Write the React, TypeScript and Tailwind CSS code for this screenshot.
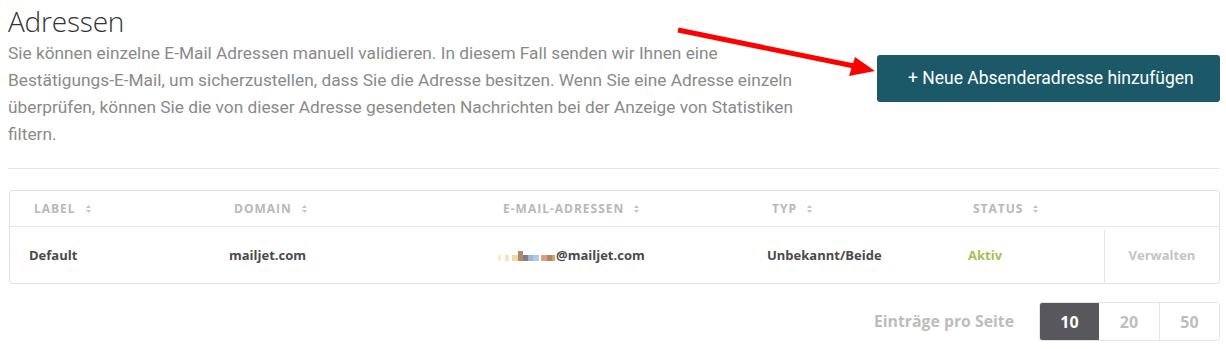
// Adressen-Übersicht
// Absenderadressen mit Tabelle und Seitenauswahl

import React from 'react'

const blurBlocks = [
  { w: 3, c: '#fbeacb' },
  { w: 4, c: '#ffffff' },
  { w: 4, c: '#f6e2bd' },
  { w: 3, c: '#ffffff' },
  { w: 6, c: '#f2d9ae' },
  { w: 5, c: '#b08a68' },
  { w: 5, c: '#7c7f8c' },
  { w: 5, c: '#9fb5c9' },
  { w: 6, c: '#a9cde9' },
  { w: 2, c: '#ffffff' },
  { w: 6, c: '#d3a47c' },
  { w: 5, c: '#b78460' },
  { w: 3, c: '#c9a07c' },
]

const SortIcon = () => (
  <svg width="7" height="10" viewBox="0 0 7 10" className="ml-[9px] inline-block">
    <path d="M3.5 1 L6 4 L1 4 Z" fill="#c4c4c4" />
    <path d="M3.5 9 L6 6 L1 6 Z" fill="#c4c4c4" />
  </svg>
)

const columns = [
  { label: 'Label', w: 'w-[200px]' },
  { label: 'Domain', w: 'w-[269px]' },
  { label: 'E-Mail-Adressen', w: 'w-[269px]' },
  { label: 'Typ', w: 'w-[201px]' },
  { label: 'Status', w: 'w-[155px]' },
]

export default function App() {
  return (
    <div className="relative w-[1226px] h-[349px] bg-white overflow-hidden pl-2 pr-[6px] font-['Roboto',sans-serif]">
      {/* Kopfbereich */}
      <div className="flex justify-between">
        <div className="w-[820px]">
          <h1 className="text-[28px] font-light leading-[36px] pt-[3px] text-[#333] font-['Open_Sans',sans-serif] tracking-[-0.2px]">
            Adressen
          </h1>
          <p className="text-[17.3px] leading-[27px] text-[#8a8a8a] mt-[1px]">
            Sie können einzelne E-Mail Adressen manuell validieren. In diesem Fall senden wir Ihnen eine
            <br />
            Bestätigungs-E-Mail, um sicherzustellen, dass Sie die Adresse besitzen. Wenn Sie eine Adresse einzeln
            <br />
            überprüfen, können Sie die von dieser Adresse gesendeten Nachrichten bei der Anzeige von Statistiken
            <br />
            filtern.
          </p>
        </div>
        <div className="pt-[55px]">
          <button className="w-[343px] h-[47px] rounded-[3px] bg-[#1b5968] text-white text-[17.5px] text-left pl-[31px]">
            + Neue Absenderadresse hinzufügen
          </button>
        </div>
      </div>

      {/* Trennlinie */}
      <div className="mt-[20px] border-t border-[#e6e6e6]" />

      {/* Tabelle */}
      <div className="mt-[21px] ml-[1px] border border-[#e2e2e2] rounded-[3px] font-['Open_Sans',sans-serif]">
        <div className="flex h-[36px] items-center border-b border-[#e6e6e6]">
          {columns.map((col) => (
            <div key={col.label} className={`${col.w} pl-6 flex items-center`}>
              <span className="text-[12px] font-bold uppercase tracking-[1px] text-[#b8b8b8]">
                {col.label}
              </span>
              <SortIcon />
            </div>
          ))}
        </div>
        <div className="flex h-[56px] items-center text-[13px] font-bold text-[#4a4a4a] pt-[2px]">
          <div className="w-[200px] pl-[19px]">Default</div>
          <div className="w-[269px] pl-[19px]">mailjet.com</div>
          <div className="w-[269px] pl-[19px] flex items-center">
            <div className="flex items-end h-[10px] mr-[1px]">
              {blurBlocks.map((b, i) => (
                <div
                  key={i}
                  className={i === 5 ? 'h-[10px]' : 'h-[6px]'}
                  style={{ width: b.w, backgroundColor: b.c }}
                />
              ))}
            </div>
            <span>@mailjet.com</span>
          </div>
          <div className="w-[201px] pl-[19px]">Unbekannt/Beide</div>
          <div className="w-[155px] pl-[19px] text-[#a3c24f]">Aktiv</div>
          <div className="flex-1 h-full border-l border-[#e6e6e6] flex items-center justify-center text-[#c4c4c4]">
            Verwalten
          </div>
        </div>
      </div>

      {/* Seitenauswahl */}
      <div className="mt-[18px] flex justify-end items-center font-['Open_Sans',sans-serif]">
        <span className="text-[15.8px] font-bold text-[#bdbdbd] mr-[25px]">Einträge pro Seite</span>
        <div className="flex h-[39px] border border-[#e6e6e6] rounded-[3px] overflow-hidden">
          <div className="w-[59px] flex items-center justify-center bg-[#58585c] text-white text-[16px] font-bold">
            10
          </div>
          <div className="w-[61px] flex items-center justify-center text-[#bdbdbd] text-[16px] font-bold border-r border-[#e6e6e6]">
            20
          </div>
          <div className="w-[59px] flex items-center justify-center text-[#bdbdbd] text-[16px] font-bold">
            50
          </div>
        </div>
      </div>

      {/* Roter Pfeil (Annotation) */}
      <svg className="absolute left-0 top-0 pointer-events-none" width="1226" height="349">
        <line x1="678" y1="30" x2="854" y2="66" stroke="#ff0000" strokeWidth="5" />
        <polygon points="875,71 849,76 855,57" fill="#ff0000" />
      </svg>
    </div>
  )
}
